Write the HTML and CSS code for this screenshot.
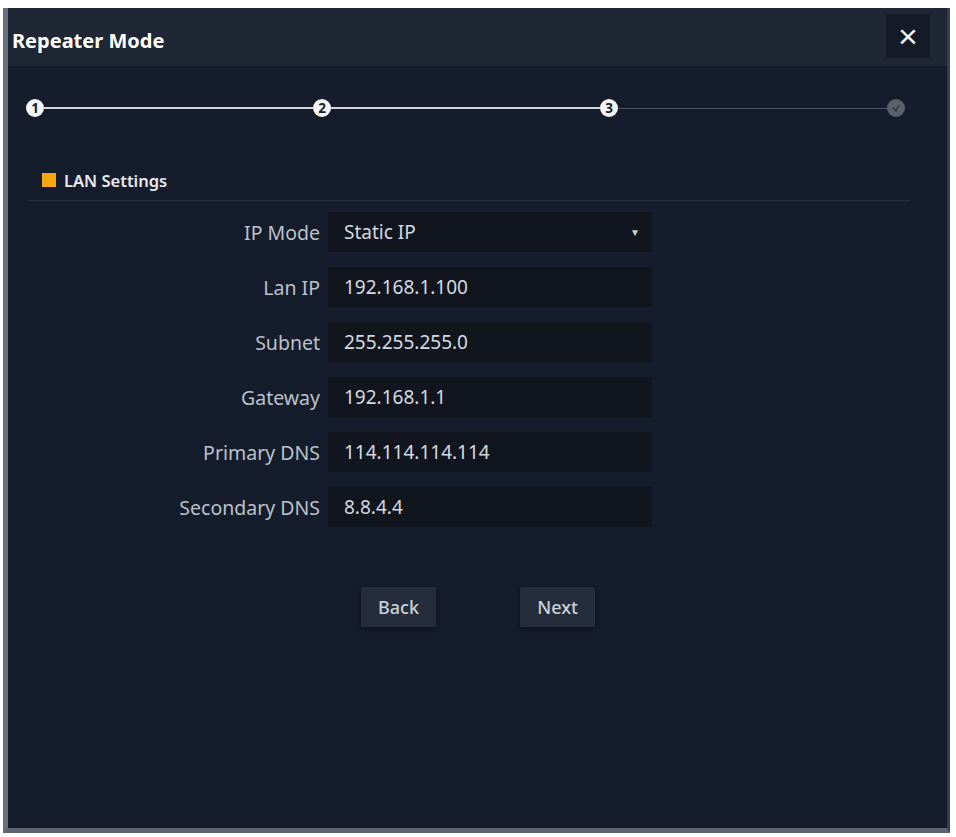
FILE: index.html
```html
<!DOCTYPE html>
<html lang="en">
<head>
    <meta charset="UTF-8">
    <meta name="viewport" content="width=device-width, initial-scale=1.0">
    <title>Repeater Mode</title>
    <link rel="stylesheet" href="styles.css">
</head>
<body>
    <div class="dialog">
        <header class="dialog-header">
            <h1>Repeater Mode</h1>
            <button class="close-btn" aria-label="Close">&times;</button>
        </header>
        <div class="dialog-body">
            <div class="stepper">
                <span class="step done">1</span>
                <span class="line done"></span>
                <span class="step done">2</span>
                <span class="line done"></span>
                <span class="step done">3</span>
                <span class="line"></span>
                <span class="step todo">
                    <svg viewBox="0 0 18 18" width="18" height="18"><path d="M6 8.5l3 3.5 3-6" fill="none" stroke="#343b48" stroke-width="1.6"/></svg>
                </span>
            </div>

            <h2 class="section-title"><span class="mark"></span>LAN Settings</h2>

            <div class="form">
                <label>IP Mode</label>
                <div class="field select">Static IP<span class="arrow">&#9660;</span></div>
                <label>Lan IP</label>
                <div class="field">192.168.1.100</div>
                <label>Subnet</label>
                <div class="field">255.255.255.0</div>
                <label>Gateway</label>
                <div class="field">192.168.1.1</div>
                <label>Primary DNS</label>
                <div class="field">114.114.114.114</div>
                <label>Secondary DNS</label>
                <div class="field">8.8.4.4</div>
            </div>

            <div class="actions">
                <button class="btn">Back</button>
                <button class="btn">Next</button>
            </div>
        </div>
    </div>
</body>
</html>
```

FILE: styles.css
```css
body {
    margin: 0;
    padding: 8px 0 0 3px;
    background: #ffffff;
    font-family: 'Noto Sans', 'Open Sans', sans-serif;
}
.dialog {
    width: 947px;
    height: 825px;
    box-sizing: border-box;
    background: #151c2b;
    border-left: 5px solid #6b717c;
    border-right: 3px solid #363d4b;
    border-bottom: 5px solid #5d6470;
    display: flex;
    flex-direction: column;
}
.dialog-header {
    height: 58px;
    background: #1f2634;
    display: flex;
    align-items: center;
    justify-content: space-between;
    padding: 0 17px 0 4px;
}
.dialog-header h1 {
    margin: 6px 0 0 0;
    font-size: 20px;
    font-weight: 700;
    color: #ffffff;
}
.close-btn {
    width: 44px;
    height: 44px;
    background: #141a26;
    border: none;
    color: #f2f3f5;
    font-size: 34px;
    line-height: 40px;
    font-weight: 300;
    padding: 0;
    cursor: pointer;
    margin-top: -2px;
}
.dialog-body {
    flex: 1;
    padding: 33px 42px 0 18px;
}
.stepper {
    display: flex;
    align-items: center;
    height: 18px;
}
.step {
    width: 18px;
    height: 18px;
    border-radius: 50%;
    background: #f4f5f7;
    color: #1a202c;
    font-size: 13.5px;
    font-weight: 700;
    display: flex;
    align-items: center;
    justify-content: center;
    flex-shrink: 0;
}
.step.todo {
    background: #5a616d;
}
.line {
    flex: 1;
    height: 1px;
    background: #4b5261;
}
.line.done {
    height: 2px;
    background: #d3d7dd;
}
.section-title {
    margin: 53px 0 0 16px;
    display: flex;
    align-items: center;
    font-size: 16.5px;
    font-weight: 600;
    color: #e8eaee;
    height: 20px;
}
.mark {
    width: 14px;
    height: 14px;
    background: #f5a611;
    margin-right: 8px;
}
.form {
    border-top: 1px solid #262e3c;
    margin: 10px -6px 0 2px;
    padding: 11px 0 0 0;
    display: grid;
    grid-template-columns: 292px 324px;
    column-gap: 8px;
    row-gap: 15px;
}
.form label {
    text-align: right;
    align-self: center;
    font-size: 19.5px;
    color: #bcc1c9;
}
.field {
    height: 40px;
    background: #10151e;
    color: #d6dae0;
    font-size: 19px;
    line-height: 40px;
    padding: 0 12px 0 16px;
    display: flex;
    justify-content: space-between;
}
.arrow {
    font-size: 10px;
    color: #c8ccd3;
}
.actions {
    display: flex;
    gap: 84px;
    margin: 60px 0 0 335px;
}
.btn {
    width: 75px;
    height: 40px;
    background: #252d3c;
    border: none;
    border-radius: 2px;
    color: #ccd1d8;
    font-family: 'Noto Sans', sans-serif;
    font-size: 18px;
    font-weight: 500;
    box-shadow: 0 2px 4px rgba(0, 0, 0, 0.35);
    cursor: pointer;
}
```
